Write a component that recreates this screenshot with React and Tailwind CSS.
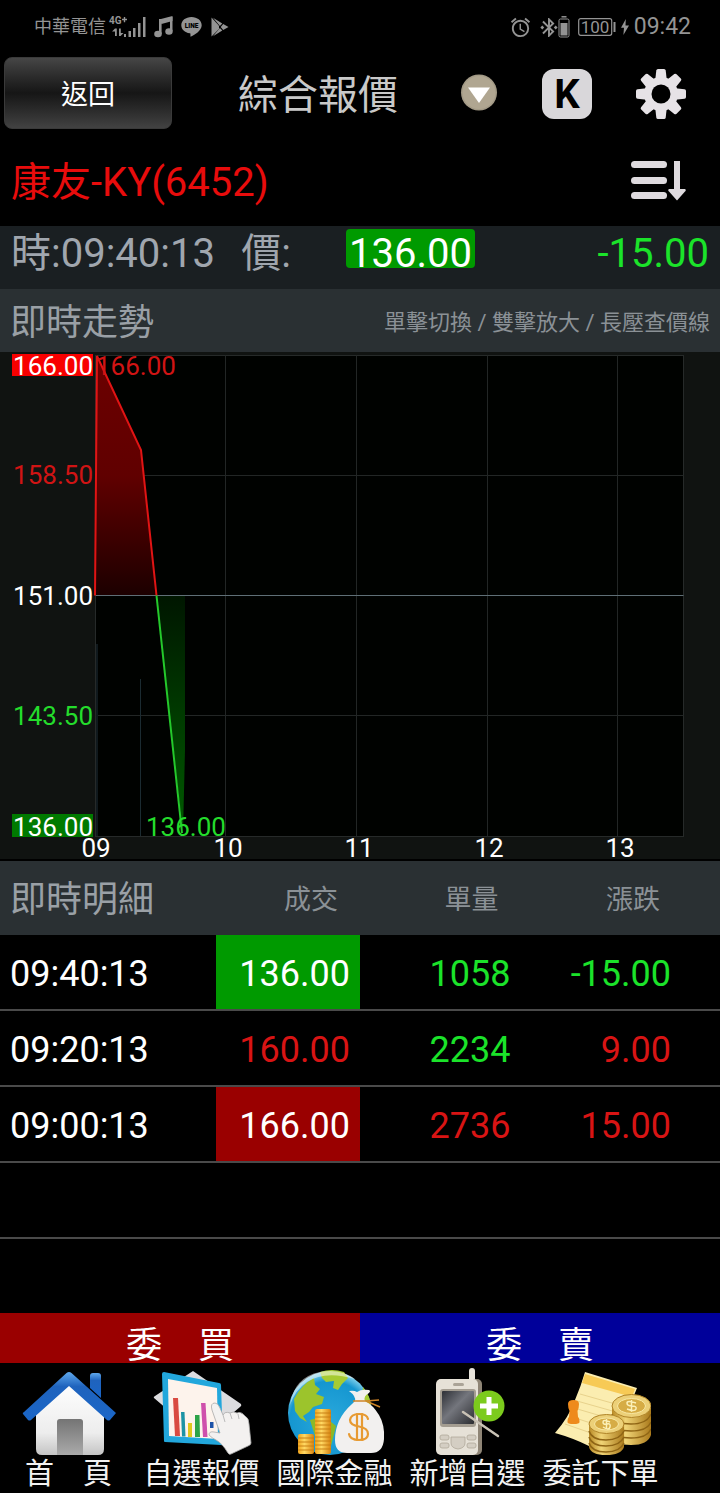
import { MdAlarm, MdBluetoothConnected } from 'react-icons/md';

const ticks = [
  { time: '09:40:13', price: '136.00', volume: '1058', change: '-15.00', priceStyle: 'bg-[#009a00] text-white', volumeStyle: 'text-[#1be32a]', changeStyle: 'text-[#1be32a]' },
  { time: '09:20:13', price: '160.00', volume: '2234', change: '9.00', priceStyle: 'text-[#d81414]', volumeStyle: 'text-[#1be32a]', changeStyle: 'text-[#d81414]' },
  { time: '09:00:13', price: '166.00', volume: '2736', change: '15.00', priceStyle: 'bg-[#9a0000] text-white', volumeStyle: 'text-[#d81414]', changeStyle: 'text-[#d81414]' },
];

function StatusBar() {
  return (
    <div className="flex items-center justify-between h-[54px] pl-[34px] pr-[29px] text-[#949494]">
      <div className="flex items-center gap-2">
        <div className="flex items-center gap-[3px]">
          <span className="text-lg leading-6">中華電信</span>
          <svg className="w-[37px] h-[22px] overflow-visible" viewBox="0 0 37 22" fill="currentColor">
            <text x="0" y="8" fontSize="10" fontWeight="700">4G</text>
            <path d="M13 2.800h5v1.400h-5zM14.800 1h1.400v5.200h-1.400z" />
            <path d="M6 12.500h1.800v7.500H6zM6 12.500v3L3 15.500zM10 12.500h1.800v7.500H10zM11.500 20v-3l3 0z" />
            <path d="M15 18h2v3h-2zM19.500 15h2.500v6h-2.500zM24 12h2.500v9H24zM29 7h2.500v14H29zM34 1h2.500v20H34z" />
          </svg>
        </div>
        <svg className="w-[19px] h-[22px]" viewBox="0 0 19 22" fill="currentColor">
          <path d="M5 3.500L18.500 0v5L7.500 8z" />
          <path d="M5 3h2.600v15H5zM16 1h2.500v14H16z" />
          <ellipse cx="4" cy="18" rx="3.800" ry="3.200" />
          <ellipse cx="15" cy="15.500" rx="3.700" ry="3.200" />
        </svg>
        <svg className="w-[21px] h-[22px]" viewBox="0 0 21 22" fill="currentColor">
          <path d="M10.500 1C4.700 1 .3 4.600.3 9.200c0 4.200 3.500 7.300 8.500 8l.6.2.1 3.400c4-1.700 11.200-6.300 11.200-11.600C20.700 4.600 16.300 1 10.500 1z" />
          <text x="10.500" y="11.500" fontSize="6.500" fontWeight="900" fill="#000" textAnchor="middle">LINE</text>
        </svg>
        <svg className="w-[19px] h-[22px]" viewBox="0 0 19 22" fill="currentColor">
          <path d="M1.500 1.500L9 9.700V13L1.500 20.500z" />
          <path d="M3 1.800l9.300 5.600-2.400 2.700zM3 20.200l9.300-5.600-2.400-2.700zM13.200 8l5.300 3-5.300 3-2.500-3z" />
        </svg>
      </div>
      <div className="flex items-center gap-2">
        <MdAlarm className="w-[23px] h-[23px]" />
        <div className="flex items-center">
          <MdBluetoothConnected className="w-[18px] h-[23px]" preserveAspectRatio="xMidYMid slice" />
          <svg className="w-3 h-[22px]" viewBox="0 0 12 22">
            <path d="M3.500 .8h5" stroke="currentColor" strokeWidth="1.500" />
            <rect x="1" y="3" width="10" height="18" rx="1.500" fill="none" stroke="currentColor" />
            <rect x="2.500" y="7" width="7" height="12.500" fill="currentColor" />
          </svg>
        </div>
        <div className="flex items-center gap-[5px]">
          <svg className="w-[38px] h-[18px] overflow-visible" viewBox="0 0 38 18" fill="currentColor">
            <rect x=".7" y=".7" width="33" height="16.600" rx="2" fill="none" stroke="currentColor" strokeWidth="1.200" />
            <path d="M35.500 4h2v10h-2z" />
            <text x="17" y="15" fontSize="17" textAnchor="middle">100</text>
          </svg>
          <svg className="w-2 h-4" viewBox="0 0 8 16" fill="currentColor">
            <path d="M4.800 0L0 8.800h3L2.400 16 8 6.400H4.500z" />
          </svg>
          <span className="text-[23px] leading-6">09:42</span>
        </div>
      </div>
    </div>
  );
}

function Header() {
  return (
    <header className="flex items-start gap-11 h-[82px] pl-1 pr-[34px]">
      <div className="flex-1 flex items-start">
        <button type="button" className="mt-[3px] pt-1 w-[168px] h-[72px] rounded-lg border border-[#3a3a3a] bg-linear-to-b from-[#464646] via-[#161616] to-[#424242] text-[27px] leading-8 text-white">
          返回
        </button>
        <h1 className="flex-1 pt-[18px] pl-12 text-center text-[40px] leading-12 whitespace-nowrap text-[#c9c9c9]">綜合報價</h1>
      </div>
      <button type="button" aria-label="選擇" className="mt-5">
        <svg className="w-[38px] h-[38px]" viewBox="0 0 38 38">
          <circle cx="19" cy="18.500" r="18" fill="#a39a86" />
          <circle cx="19" cy="18.500" r="16.500" fill="#b0a691" />
          <path d="M8 13.500h22L19 29z" fill="#fff" />
        </svg>
      </button>
      <button type="button" className="mt-[15px] w-[50px] h-[50px] pt-[2px] rounded-xl bg-[#d9d7da] text-[40px] leading-12 font-bold text-black">
        K
      </button>
      <button type="button" aria-label="設定" className="mt-[15px]">
        <svg className="w-[50px] h-[50px]" viewBox="-25 -25 50 50" fill="#e6e2e6">
          {[0, 45, 90, 135].map((deg) => (
            <path key={deg} transform={`rotate(${deg})`} d="M-3 -25H3Q4.500 -25 4.700 -23.500L6 -12V12L4.700 23.500Q4.500 25 3 25H-3Q-4.500 25 -4.700 23.500L-6 12V-12L-4.700 -23.500Q-4.500 -25 -3 -25Z" />
          ))}
          <circle r="17" />
          <circle r="9.500" fill="#000" />
        </svg>
      </button>
    </header>
  );
}

// Price line: x is trading time from 09:00, y is price from 166 down to 136
function TrendChart() {
  return (
    <svg className="block w-full h-auto overflow-visible" viewBox="0 0 720 507" fontSize="26" role="img" aria-label="即時走勢圖">
      <defs>
        <linearGradient id="up" x1="0" y1="0" x2="0" y2="1">
          <stop offset="0" stopColor="#6c0000" />
          <stop offset="0.5" stopColor="#600000" />
          <stop offset="1" stopColor="#1c0000" />
        </linearGradient>
        <linearGradient id="down" x1="0" y1="0" x2="0" y2="1">
          <stop offset="0" stopColor="#001600" />
          <stop offset="0.5" stopColor="#003a00" />
          <stop offset="1" stopColor="#005a00" />
        </linearGradient>
      </defs>
      <rect width="720" height="507" fill="#101311" />
      <rect x="95.500" y="3.500" width="588" height="481" fill="#000200" stroke="#262a29" />
      <path d="M225.500 3.500v481M356.500 3.500v481M487.500 3.500v481M617.500 3.500v481M95.500 123.500h588M95.500 363.500h588" stroke="#222625" />
      <path d="M97 292v192" stroke="#10191d" strokeWidth="2" />
      <path d="M140.500 327v157" stroke="#1b2b31" />
      <path d="M95 243.500L97 4l44 94 15.500 145.500z" fill="url(#up)" />
      <path d="M156.500 243.500H185V398l-2 83z" fill="url(#down)" />
      <path d="M95.500 243.500h588" stroke="#5f6f76" />
      <path d="M95 243.500L97 4l44 94 15.500 145.500" fill="none" stroke="#e01414" strokeWidth="2" />
      <path d="M156.500 243.500L182 481" stroke="#24c92b" strokeWidth="2" />
      <rect x="12" y="2" width="81" height="22" fill="#f80000" />
      <rect x="12" y="462" width="81" height="23" fill="#007a00" />
      <g textAnchor="end">
        <text x="93" y="23" fill="#fff">166.00</text>
        <text x="93" y="132" fill="#d01414">158.50</text>
        <text x="93" y="253" fill="#fff">151.00</text>
        <text x="93" y="373" fill="#24dc2c">143.50</text>
        <text x="93" y="484" fill="#fff">136.00</text>
      </g>
      <text x="96" y="23" fill="#d01414">166.00</text>
      <text x="146" y="484" fill="#24dc2c">136.00</text>
      <g fill="#fff" textAnchor="middle">
        <text x="96" y="505">09</text>
        <text x="228" y="505">10</text>
        <text x="359" y="505">11</text>
        <text x="489" y="505">12</text>
        <text x="620" y="505">13</text>
      </g>
    </svg>
  );
}

function TickTable() {
  return (
    <table className="w-full table-fixed border-separate border-spacing-0">
      <thead>
        <tr className="bg-[#2a3033] text-[27px] leading-9 text-[#8b9196]">
          <th className="w-[30%] h-[74px] pt-1 pl-[10px] text-left text-4xl font-normal whitespace-nowrap text-[#9aa0a6]">即時明細</th>
          <th className="w-[20%] pt-1 pr-[22px] text-right font-normal">成交</th>
          <th className="w-[22%] pt-1 pr-5 text-right font-normal">單量</th>
          <th className="w-[28%] pt-1 pr-[60px] text-right font-normal">漲跌</th>
        </tr>
      </thead>
      <tbody className="text-4xl">
        {ticks.map((t) => (
          <tr key={t.time}>
            <td className="h-[76px] pt-[3px] pl-[10px] border-b-2 border-[#4a4a4a] text-white">{t.time}</td>
            <td className={`pt-[3px] pr-[10px] border-b-2 border-[#4a4a4a] text-right ${t.priceStyle}`}>{t.price}</td>
            <td className={`pt-[3px] pr-2 border-b-2 border-[#4a4a4a] text-right ${t.volumeStyle}`}>{t.volume}</td>
            <td className={`pt-[3px] pr-[49px] border-b-2 border-[#4a4a4a] text-right ${t.changeStyle}`}>{t.change}</td>
          </tr>
        ))}
        <tr>
          <td colSpan={4} className="h-[76px] border-b-2 border-[#4a4a4a]" />
        </tr>
        <tr>
          <td colSpan={4} className="h-[74px]" />
        </tr>
      </tbody>
    </table>
  );
}

function HomeIcon() {
  return (
    <svg className="w-[100px] h-[90px]" viewBox="0 0 100 90">
      <defs>
        <linearGradient id="wall" x1="0" y1="0" x2="0" y2="1">
          <stop offset="0" stopColor="#fff" />
          <stop offset="0.7" stopColor="#ededed" />
          <stop offset="1" stopColor="#c4c4c4" />
        </linearGradient>
        <linearGradient id="roof" x1="0" y1="0" x2="0" y2="1">
          <stop offset="0" stopColor="#5fa8ec" />
          <stop offset="0.3" stopColor="#1f63bd" />
          <stop offset="1" stopColor="#1a66c8" />
        </linearGradient>
        <linearGradient id="door" x1="0" y1="0" x2="0" y2="1">
          <stop offset="0" stopColor="#747474" />
          <stop offset="1" stopColor="#aaa" />
        </linearGradient>
      </defs>
      <path d="M71 9q0-3 3-3h5q3 0 3 3v22L71 21z" fill="url(#roof)" />
      <path d="M50 14L17 44v38q0 6 6 6h56q6 0 6-6V44z" fill="url(#wall)" />
      <path d="M47.500 6q2.500-2 5 0L97 46l-6 7q-1.500 1-3 0L50 19 12 53q-1.500 1-3 0l-5-6q-1-1 1-2z" fill="url(#roof)" />
      <path d="M38 88V55q0-3 3-3h20q3 0 3 3v33z" fill="url(#door)" />
    </svg>
  );
}

function QuoteIcon() {
  return (
    <svg className="w-[100px] h-[90px]" viewBox="0 0 100 90">
      <path d="M41 4L89 37q1 2-1 3L50 72 2 31q-1-1 1-2z" fill="#dcdcdf" />
      <path d="M10 7q0-2 2-2l55 11q2 0 2 2l2 58q0 3-2 2l-56-3q-1 0-1-1z" fill="#22a7dc" />
      <path d="M16 12l49 9 1 51-49-3z" fill="#fdf3ec" />
      <path d="M21 31h5l2 38h-5z" fill="#d94b42" />
      <path d="M29 45h3.500l1 24.500H30z" fill="#1c93a5" />
      <path d="M36 56h4v14h-4z" fill="#dfc81d" />
      <path d="M43 48h4.500l.5 22h-5z" fill="#2da348" />
      <path d="M49 36h4.500l2 34H51z" fill="#cf50ac" />
      <path d="M58 55h3.500v6H58z" fill="#1f53a8" />
      <path d="M60 43q-2-7 3-7 3 0 5 5l3 7q2-4 7-2 3-2 7 0 4-2 8 3 4 2 4 8l2 19q0 2-3 3l-17 8q-2 1-3-1-6-10-12-13-4-2-7-5 0-4 5-3l6 1z" fill="#f3f1f0" stroke="#a9a9a9" strokeWidth=".8" />
      <path d="M71 48l2 7M78 46l2 6M86 47l1 5" stroke="#bbb" fill="none" />
    </svg>
  );
}

function FinanceIcon() {
  return (
    <svg className="w-[100px] h-[90px]" viewBox="0 0 100 90">
      <defs>
        <radialGradient id="sea" cx=".5" cy=".6" r=".6">
          <stop offset="0" stopColor="#2aa9dc" />
          <stop offset="0.8" stopColor="#1596d0" />
          <stop offset="1" stopColor="#8fd8ee" />
        </radialGradient>
        <linearGradient id="gold">
          <stop offset="0" stopColor="#f0a41c" />
          <stop offset="0.4" stopColor="#ffd964" />
          <stop offset="1" stopColor="#d8820e" />
        </linearGradient>
      </defs>
      <circle cx="45" cy="46" r="42" fill="url(#sea)" />
      <path d="M9 32Q17 17 29 11l1 7 5 4-4 5 8 3-2 7-9 3-4 5-6 4 4 6-7-4-5-7z" fill="#9cc42c" />
      <path d="M35 5q12-4 24 0l4 6-6 6-4 6-5-2 1-7-8 1-4-4z" fill="#a6cb33" />
      <path d="M25 53l14-4 12 10-5 20-9 5-7-15z" fill="#8cb828" />
      <path d="M78 20q8 10 8 20l-10-4z" fill="#a6cb33" />
      <path d="M5 38Q9 10 35 5q20-4 35 7-30-9-48 3Q10 23 5 38z" fill="#fff" opacity=".5" />
      <rect x="13" y="67" width="16" height="20" rx="2" fill="url(#gold)" />
      <rect x="30" y="42" width="16" height="45" rx="2" fill="url(#gold)" />
      <path d="M13 71h16M13 75h16M13 79h16M13 83h16M30 46h16M30 50h16M30 54h16M30 58h16M30 62h16M30 66h16M30 70h16M30 74h16M30 78h16M30 82h16" stroke="#c57a10" strokeWidth=".9" />
      <path d="M64 24q5-1 8 1 4-3 12-2 2 1 0 3-6 3-4 8 8 4 14 14 6 10 5 24-1 14-13 14H62Q50 86 50 73q0-21 17-36l3-3q1-5-6-10z" fill="#f2f0ef" />
      <path d="M68 34h13l14 6M81 34l13-1" fill="none" stroke="#cf8427" strokeWidth="1.500" />
      <g fill="none" stroke="#e79a32" strokeWidth="2.200" strokeLinecap="round">
        <path d="M83 52q-1-5-9-5t-9 6q0 5 9 6.500t9 7.500q0 6-9 6t-10-6" />
        <path d="M72 47v26M77 47v26" />
      </g>
    </svg>
  );
}

function AddPhoneIcon() {
  return (
    <svg className="w-[100px] h-[90px]" viewBox="0 0 100 90">
      <defs>
        <linearGradient id="screen" x1="0" y1="0" x2="1" y2="1">
          <stop offset="0" stopColor="#2e3036" />
          <stop offset="0.45" stopColor="#74767d" />
          <stop offset="1" stopColor="#2c2d31" />
        </linearGradient>
      </defs>
      <rect x="51" y="1" width="6" height="18" rx="3" fill="#e7e3da" />
      <rect x="19" y="12" width="45" height="76" rx="5" fill="#8f8576" />
      <rect x="18" y="12" width="42" height="76" rx="5" fill="#e6e1d7" />
      <rect x="35" y="16" width="11" height="3" rx="1.500" fill="#aaa397" />
      <rect x="22" y="22" width="36" height="38" rx="3" fill="#a49d91" />
      <rect x="24" y="24" width="32" height="33" rx="1" fill="url(#screen)" />
      <g fill="#d4cec3" stroke="#b0a89b" strokeWidth=".8">
        <rect x="22" y="68" width="9" height="5" rx="2" />
        <rect x="22" y="76" width="9" height="5" rx="2" />
        <rect x="49" y="68" width="9" height="5" rx="2" />
        <rect x="49" y="76" width="9" height="5" rx="2" />
        <path d="M33 70h14v6q0 5-7 6-7-1-7-6z" />
      </g>
      <circle cx="71" cy="39" r="15.500" fill="#7ccb1d" />
      <path d="M68.500 30h5v6.500H80v5h-6.500V48h-5v-6.500H62v-5h6.500z" fill="#fff" />
      <path d="M45 45l35 24" stroke="#c9c2b5" strokeWidth="2.500" strokeLinecap="round" />
    </svg>
  );
}

function OrderIcon() {
  return (
    <svg className="w-[100px] h-[90px]" viewBox="0 0 100 90">
      <defs>
        <linearGradient id="coin">
          <stop offset="0" stopColor="#b98a25" />
          <stop offset="0.35" stopColor="#f0d476" />
          <stop offset="1" stopColor="#aa7a1c" />
        </linearGradient>
      </defs>
      <path d="M34 5l52 16q-8 20-14 34L38 79Q22 71 4 66q14-16 20-33 6-14 10-28z" fill="#fbedb0" />
      <path d="M34 7l50 15-3 8-50-14z" fill="#f7ca55" />
      <path d="M29 27l46 13M26 34l46 13M23 41l34 10M18 49l28 9M14 57l26 9" stroke="#e8d28c" />
      <path d="M17 37q0-4 5.500-4t5.500 4q0 4-1.500 7l.5 6q1.500 1 1.500 5 0 2-6 2t-6-2q0-4 1.500-5l.5-6q-1.500-3-1.500-7z" fill="#ee8a1c" />
      <path d="M61 39v29q2 10 19 10t20-10V39z" fill="url(#coin)" />
      <path d="M61 47q3 10 19 10t20-10M61 55q3 9 19 9t20-9M61 62q3 9 19 9t20-9" fill="none" stroke="#8f6515" strokeWidth="1.500" />
      <ellipse cx="80.500" cy="39" rx="19.500" ry="11.500" fill="#ecd078" stroke="#b08428" />
      <ellipse cx="80.500" cy="39" rx="14" ry="7.500" fill="#d6ac45" stroke="#f8e8a4" />
      <path d="M85 36q-9-3-9 0t5 3 4 3-9 0M80.500 33v12" fill="none" stroke="#fbf0b8" strokeWidth="1.500" />
      <path d="M38 57v23q2 8 17 8t18-8V57z" fill="url(#coin)" />
      <path d="M38 64q3 9 17 9t18-9M38 70q3 9 17 9t18-9M38 76q3 9 17 9t18-9" fill="none" stroke="#8f6515" strokeWidth="1.500" />
      <ellipse cx="55.500" cy="57" rx="17.500" ry="9.500" fill="#ecd078" stroke="#b08428" />
      <ellipse cx="55.500" cy="57" rx="12" ry="6" fill="#d6ac45" stroke="#f8e8a4" />
      <path d="M59 55q-7-3-7 0t4 2 3 3-7 0M55.500 52v10" fill="none" stroke="#fbf0b8" strokeWidth="1.500" />
    </svg>
  );
}

const menu = [
  { label: '首　頁', Icon: HomeIcon },
  { label: '自選報價', Icon: QuoteIcon },
  { label: '國際金融', Icon: FinanceIcon },
  { label: '新增自選', Icon: AddPhoneIcon },
  { label: '委託下單', Icon: OrderIcon },
];

export default function App() {
  return (
    <div className="min-h-screen bg-black font-['Roboto','Noto_Sans_CJK_TC',sans-serif]">
      <StatusBar />
      <Header />

      <div className="flex items-center justify-between h-[90px] pl-[11px] pr-[34px]">
        <h2 className="pt-1 text-[40px] leading-12 text-[#e80c0c]">康友-KY(6452)</h2>
        <button type="button" aria-label="排序">
          <svg className="w-[55px] h-10" viewBox="0 0 55 40" fill="#dedade">
            <rect x="0" y="0" width="36" height="7" rx="3.500" />
            <rect x="0" y="16" width="36" height="7" rx="3.500" />
            <rect x="0" y="31" width="36" height="7" rx="3.500" />
            <path d="M43 0h6v28h5q1.500 1 0 2.500l-8 9-8-9Q36.500 29 38 28h5z" />
          </svg>
        </button>
      </div>

      {/* Last trade */}
      <div className="grid grid-cols-[33%_15%_1fr_auto] items-start h-[63px] px-[11px] bg-[#1a1f22] text-[40px] leading-[56px] text-[#a0a6ae]">
        <span className="whitespace-nowrap">時:09:40:13</span>
        <span>價:</span>
        <span className="justify-self-start mt-[3px] h-[39px] px-[3px] rounded-sm bg-[#009a00] leading-[50px] text-white">136.00</span>
        <span className="text-[#1be32a]">-15.00</span>
      </div>

      <div className="flex items-center justify-between h-[63px] pt-1 pl-[10px] pr-[10px] bg-[#2a3033]">
        <h3 className="text-4xl text-[#9aa0a6]">即時走勢</h3>
        <p className="text-[22px] leading-8 text-[#8b9196]">單擊切換 / 雙擊放大 / 長壓查價線</p>
      </div>
      <div className="pb-[2px]">
        <TrendChart />
      </div>

      <TickTable />

      <div className="grid grid-cols-2 text-center text-4xl text-white">
        <div className="h-[50px] pt-[13px] bg-[#9a0000]">委　買</div>
        <div className="h-[50px] pt-[13px] bg-[#00009a]">委　賣</div>
      </div>

      <nav className="flex pl-[2px] pt-1 overflow-hidden">
        {menu.map(({ label, Icon }) => (
          <a key={label} href="#" className="shrink-0 flex flex-col items-center w-[133px] text-[29px] leading-[34px] text-[#f2f2f2]">
            <Icon />
            {label}
          </a>
        ))}
      </nav>
    </div>
  );
}
